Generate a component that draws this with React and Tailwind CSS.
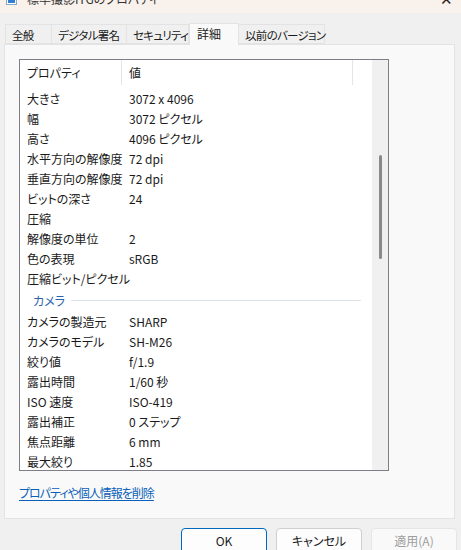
import React from "react";

const tabs = [
  { label: "全般", w: "w-[47px]" },
  { label: "デジタル署名", w: "w-[75px]" },
  { label: "セキュリティ", w: "w-[62px]" },
  { label: "詳細", w: "w-[50px]", active: true },
  { label: "以前のバージョン", w: "w-[86px]" },
];

const imageProps = [
  ["大きさ", "3072 x 4096"],
  ["幅", "3072 ピクセル"],
  ["高さ", "4096 ピクセル"],
  ["水平方向の解像度", "72 dpi"],
  ["垂直方向の解像度", "72 dpi"],
  ["ビットの深さ", "24"],
  ["圧縮", ""],
  ["解像度の単位", "2"],
  ["色の表現", "sRGB"],
  ["圧縮ビット/ピクセル", ""],
];

const cameraProps = [
  ["カメラの製造元", "SHARP"],
  ["カメラのモデル", "SH-M26"],
  ["絞り値", "f/1.9"],
  ["露出時間", "1/60 秒"],
  ["ISO 速度", "ISO-419"],
  ["露出補正", "0 ステップ"],
  ["焦点距離", "6 mm"],
  ["最大絞り", "1.85"],
];

const Row = ({ name, value }) => (
  <div className="flex h-[20px] items-center">
    <div className="w-[102px] shrink-0 pl-[7px] whitespace-nowrap">{name}</div>
    <div className="pl-[7px] whitespace-nowrap">{value}</div>
  </div>
);

export default function App() {
  return (
    <div
      className="w-[461px] h-[550px] overflow-hidden bg-[#f0f0f0] text-[12px] text-[#1a1a1a] [font-feature-settings:'palt']"
      style={{ fontFamily: '"Noto Sans CJK JP", "Noto Sans", sans-serif' }}
    >
      {/* タイトルバー（上端が画面外） */}
      <div className="h-[13px] overflow-hidden bg-[#f9f1ec]">
        <div className="flex w-full items-center h-[22px] -mt-[12px] pl-[6px] pr-[8px]">
          <div className="w-[11px] h-[12px] border border-[#8aa8c8] bg-white flex items-end justify-center">
            <div className="w-[7px] h-[7px] bg-[#2f7fd6] mb-[1px]" />
          </div>
          <div className="ml-[10px] text-[12px] leading-[22px] text-[#333]">標準撮影ITGのプロパティ</div>
          <div className="ml-auto text-[15px] leading-[22px] text-[#222]">✕</div>
        </div>
      </div>

      {/* タブ */}
      <div className="h-[31px] flex items-end pl-[5px]">
        {tabs.map((t) =>
          t.active ? (
            <div
              key={t.label}
              className={`${t.w} h-[22px] -mb-px relative z-10 bg-[#f9f9f9] border border-b-0 border-[#e3e3e3] pl-[7px] leading-[20px]`}
            >
              {t.label}
            </div>
          ) : (
            <div
              key={t.label}
              className={`${t.w} h-[20px] bg-[#f0f0f0] border border-[#e3e3e3] border-l-0 first:border-l pl-[6px] leading-[20px] whitespace-nowrap text-[11.5px] tracking-[-0.7px]`}
            >
              {t.label}
            </div>
          )
        )}
      </div>

      {/* 詳細パネル */}
      <div className="mx-[4px] w-[451px] h-[475px] bg-[#f9f9f9] border border-[#e3e3e3] pt-[14px] pl-[14px]">
        <div className="w-[370px] h-[412px] border border-[#7e7f86] bg-white flex">
          <div className="flex-1 overflow-hidden">
            <div className="flex h-[25px] items-center">
              <div className="w-[102px] shrink-0 pl-[7px] h-full flex items-center border-r border-[#e5e5e5]">
                プロパティ
              </div>
              <div className="w-[231px] shrink-0 pl-[7px] h-full flex items-center border-r border-[#e5e5e5]">
                値
              </div>
            </div>
            <div className="pt-[4px]">
              {imageProps.map(([n, v]) => (
                <Row key={n} name={n} value={v} />
              ))}
              <div className="flex h-[23px] items-center pl-[13px] pr-[11px]">
                <span className="text-[#2b63b0]">カメラ</span>
                <div className="flex-1 ml-[6px] h-px bg-[#dde3ea]" />
              </div>
              {cameraProps.map(([n, v]) => (
                <Row key={n} name={n} value={v} />
              ))}
            </div>
          </div>
          {/* スクロールバー */}
          <div className="w-[16px] h-full bg-[#f0f0f0] flex justify-center pt-[95px]">
            <div className="w-[3px] h-[104px] bg-[#8a8a8a] rounded-full" />
          </div>
        </div>
        <div className="mt-[14px] leading-[16px]">
          <span className="text-[#0a5fb8] underline underline-offset-2 tracking-[-1px]">
            プロパティや個人情報を削除
          </span>
        </div>
      </div>

      {/* ボタン */}
      <div className="flex justify-end gap-[9px] pt-[9px] pr-[4px]">
        <button className="w-[86px] h-[26px] rounded-[4px] border border-[#0067c0] bg-[#fdfdfd] text-[#1a1a1a]">
          OK
        </button>
        <button className="w-[86px] h-[26px] rounded-[4px] border border-[#d0d0d0] bg-[#fdfdfd] text-[#1a1a1a]">
          キャンセル
        </button>
        <button className="w-[86px] h-[26px] rounded-[4px] border border-[#e5e5e5] bg-[#f9f9f9] text-[#9d9d9d]">
          適用(A)
        </button>
      </div>
    </div>
  );
}
